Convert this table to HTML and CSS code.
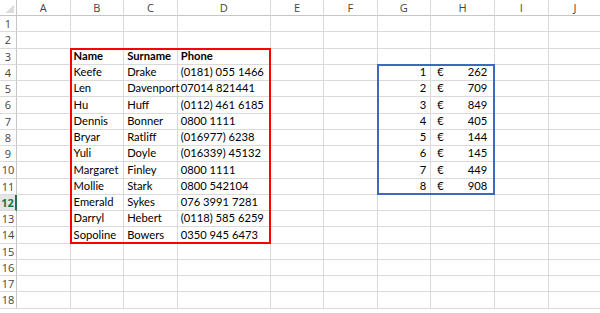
FILE: index.html
```html
<!DOCTYPE html>
<html lang="en">
<head>
    <meta charset="UTF-8">
    <meta name="viewport" content="width=device-width, initial-scale=1.0">
    <title>Sheet1</title>
    <link rel="stylesheet" href="styles.css">
</head>
<body>
    <div class="sheet">
        <!-- column headers -->
        <div class="corner"></div>
        <div class="colhead">A</div>
        <div class="colhead">B</div>
        <div class="colhead">C</div>
        <div class="colhead">D</div>
        <div class="colhead">E</div>
        <div class="colhead">F</div>
        <div class="colhead">G</div>
        <div class="colhead">H</div>
        <div class="colhead">I</div>
        <div class="colhead">J</div>

        <!-- row 1 -->
        <div class="rowhead">1</div>
        <div class="cell"></div><div class="cell"></div><div class="cell"></div><div class="cell"></div><div class="cell"></div>
        <div class="cell"></div><div class="cell"></div><div class="cell"></div><div class="cell"></div><div class="cell"></div>

        <!-- row 2 -->
        <div class="rowhead">2</div>
        <div class="cell"></div><div class="cell"></div><div class="cell"></div><div class="cell"></div><div class="cell"></div>
        <div class="cell"></div><div class="cell"></div><div class="cell"></div><div class="cell"></div><div class="cell"></div>

        <!-- row 3 -->
        <div class="rowhead">3</div>
        <div class="cell"></div>
        <div class="cell bold">Name</div>
        <div class="cell bold">Surname</div>
        <div class="cell bold">Phone</div>
        <div class="cell"></div><div class="cell"></div><div class="cell"></div><div class="cell"></div><div class="cell"></div><div class="cell"></div>

        <div class="rowhead">4</div>
        <div class="cell"></div>
        <div class="cell">Keefe</div>
        <div class="cell">Drake</div>
        <div class="cell">(0181) 055 1466</div>
        <div class="cell"></div><div class="cell"></div>
        <div class="cell num">1</div>
        <div class="cell money"><span>€</span><span>262</span></div>
        <div class="cell"></div><div class="cell"></div>

        <div class="rowhead">5</div>
        <div class="cell"></div>
        <div class="cell">Len</div>
        <div class="cell">Davenport</div>
        <div class="cell">07014 821441</div>
        <div class="cell"></div><div class="cell"></div>
        <div class="cell num">2</div>
        <div class="cell money"><span>€</span><span>709</span></div>
        <div class="cell"></div><div class="cell"></div>

        <div class="rowhead">6</div>
        <div class="cell"></div>
        <div class="cell">Hu</div>
        <div class="cell">Huff</div>
        <div class="cell">(0112) 461 6185</div>
        <div class="cell"></div><div class="cell"></div>
        <div class="cell num">3</div>
        <div class="cell money"><span>€</span><span>849</span></div>
        <div class="cell"></div><div class="cell"></div>

        <div class="rowhead">7</div>
        <div class="cell"></div>
        <div class="cell">Dennis</div>
        <div class="cell">Bonner</div>
        <div class="cell">0800 1111</div>
        <div class="cell"></div><div class="cell"></div>
        <div class="cell num">4</div>
        <div class="cell money"><span>€</span><span>405</span></div>
        <div class="cell"></div><div class="cell"></div>

        <div class="rowhead">8</div>
        <div class="cell"></div>
        <div class="cell">Bryar</div>
        <div class="cell">Ratliff</div>
        <div class="cell">(016977) 6238</div>
        <div class="cell"></div><div class="cell"></div>
        <div class="cell num">5</div>
        <div class="cell money"><span>€</span><span>144</span></div>
        <div class="cell"></div><div class="cell"></div>

        <div class="rowhead">9</div>
        <div class="cell"></div>
        <div class="cell">Yuli</div>
        <div class="cell">Doyle</div>
        <div class="cell">(016339) 45132</div>
        <div class="cell"></div><div class="cell"></div>
        <div class="cell num">6</div>
        <div class="cell money"><span>€</span><span>145</span></div>
        <div class="cell"></div><div class="cell"></div>

        <div class="rowhead">10</div>
        <div class="cell"></div>
        <div class="cell">Margaret</div>
        <div class="cell">Finley</div>
        <div class="cell">0800 1111</div>
        <div class="cell"></div><div class="cell"></div>
        <div class="cell num">7</div>
        <div class="cell money"><span>€</span><span>449</span></div>
        <div class="cell"></div><div class="cell"></div>

        <div class="rowhead">11</div>
        <div class="cell"></div>
        <div class="cell">Mollie</div>
        <div class="cell">Stark</div>
        <div class="cell">0800 542104</div>
        <div class="cell"></div><div class="cell"></div>
        <div class="cell num">8</div>
        <div class="cell money"><span>€</span><span>908</span></div>
        <div class="cell"></div><div class="cell"></div>

        <div class="rowhead active">12</div>
        <div class="cell"></div>
        <div class="cell">Emerald</div>
        <div class="cell">Sykes</div>
        <div class="cell">076 3991 7281</div>
        <div class="cell"></div><div class="cell"></div><div class="cell"></div><div class="cell"></div><div class="cell"></div><div class="cell"></div>

        <div class="rowhead">13</div>
        <div class="cell"></div>
        <div class="cell">Darryl</div>
        <div class="cell">Hebert</div>
        <div class="cell">(0118) 585 6259</div>
        <div class="cell"></div><div class="cell"></div><div class="cell"></div><div class="cell"></div><div class="cell"></div><div class="cell"></div>

        <div class="rowhead">14</div>
        <div class="cell"></div>
        <div class="cell">Sopoline</div>
        <div class="cell">Bowers</div>
        <div class="cell">0350 945 6473</div>
        <div class="cell"></div><div class="cell"></div><div class="cell"></div><div class="cell"></div><div class="cell"></div><div class="cell"></div>

        <div class="rowhead">15</div>
        <div class="cell"></div><div class="cell"></div><div class="cell"></div><div class="cell"></div><div class="cell"></div>
        <div class="cell"></div><div class="cell"></div><div class="cell"></div><div class="cell"></div><div class="cell"></div>

        <div class="rowhead">16</div>
        <div class="cell"></div><div class="cell"></div><div class="cell"></div><div class="cell"></div><div class="cell"></div>
        <div class="cell"></div><div class="cell"></div><div class="cell"></div><div class="cell"></div><div class="cell"></div>

        <div class="rowhead">17</div>
        <div class="cell"></div><div class="cell"></div><div class="cell"></div><div class="cell"></div><div class="cell"></div>
        <div class="cell"></div><div class="cell"></div><div class="cell"></div><div class="cell"></div><div class="cell"></div>

        <div class="rowhead">18</div>
        <div class="cell"></div><div class="cell"></div><div class="cell"></div><div class="cell"></div><div class="cell"></div>
        <div class="cell"></div><div class="cell"></div><div class="cell"></div><div class="cell"></div><div class="cell"></div>

        <!-- range outlines drawn over the cells -->
        <div class="outline outline-red"></div>
        <div class="outline outline-blue"></div>
    </div>
</body>
</html>
```

FILE: styles.css
```css
body {
    margin: 0;
    background-color: #fff;
    font-family: Lato, "Open Sans", sans-serif;
    overflow: hidden;
}
.sheet {
    position: relative;
    display: grid;
    grid-template-columns: 17px 53.6px 53.6px 53.6px 93px 53.4px 53.4px 53.6px 64px 53.5px 53.5px;
    grid-template-rows: 16px repeat(18, 16.25px);
    width: 602px;
    font-size: 11.2px;
    color: #000;
}
.corner {
    border-right: 1px solid #c6c6c6;
    border-bottom: 1px solid #c6c6c6;
    background: linear-gradient(135deg, transparent 58%, #dcdcdc 58%) no-repeat right 2px bottom 2px / 10px 10px;
}
.colhead {
    display: flex;
    align-items: center;
    justify-content: center;
    color: #444;
    font-family: "Open Sans", sans-serif;
    font-size: 11px;
    border-right: 1px solid #dadada;
    border-bottom: 1px solid #c6c6c6;
}
.rowhead {
    display: flex;
    align-items: center;
    justify-content: center;
    color: #444;
    font-family: "Open Sans", sans-serif;
    font-size: 11px;
    border-right: 1px solid #c6c6c6;
    border-bottom: 1px solid #dadada;
}
.rowhead.active {
    color: #217346;
    font-weight: bold;
    background-color: #e6e6e6;
    border-right: 2px solid #217346;
}
.cell {
    display: flex;
    align-items: flex-end;
    padding: 0 3px 1px 3px;
    line-height: 14px;
    white-space: nowrap;
    border-right: 1px solid #dadada;
    border-bottom: 1px solid #dadada;
    min-width: 0;
}
.bold {
    font-weight: bold;
}
.num {
    justify-content: flex-end;
    padding-right: 4px;
}
.money {
    justify-content: space-between;
    padding: 0 7px 1px 6px;
}
.outline {
    position: absolute;
    top: -1px;
    left: -1px;
    right: 0;
    bottom: 0;
    pointer-events: none;
}
.outline-red {
    grid-row: 4 / 16;
    grid-column: 3 / 6;
    border: 2px solid #f00;
}
.outline-blue {
    grid-row: 5 / 13;
    grid-column: 8 / 10;
    border: 2px solid #3f68bf;
}
```
